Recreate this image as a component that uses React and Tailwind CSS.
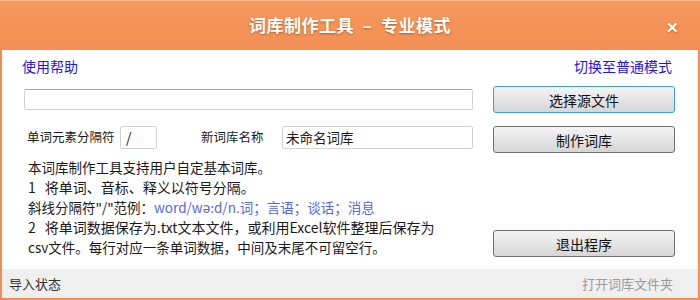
import React from 'react';

const font = { fontFamily: '"Noto Sans CJK SC", "Noto Sans", sans-serif' };

function Btn({ children, focused }) {
  return (
    <button
      className={
        focused
          ? 'w-[182px] h-[27px] shrink-0 rounded-[3px] border border-[#3a9fdc] bg-gradient-to-b from-[#f4f4f4] to-[#d6d6d6] text-[14px] text-[#111] leading-none'
          : 'w-[182px] h-[27px] shrink-0 rounded-[3px] border border-[#707070] bg-gradient-to-b from-[#f4f4f4] to-[#d6d6d6] text-[14px] text-[#111] leading-none'
      }
    >
      {children}
    </button>
  );
}

export default function App() {
  return (
    <div className="w-[700px] h-[300px] flex flex-col bg-[#f28e54] overflow-hidden" style={font}>
      {/* title bar */}
      <div className="h-[50px] shrink-0 flex items-center justify-center relative bg-gradient-to-b from-[#f7985c] to-[#f28e54] border-t border-[#f9b58a]">
        <span className="text-white font-bold text-[17px] [text-shadow:0_1px_2px_rgba(120,50,0,0.5)] tracking-[0.5px] -mt-[1px] whitespace-pre">
          词库制作工具  –  专业模式
        </span>
        <span className="absolute right-[21px] top-[15px] text-white font-bold text-[15px] [text-shadow:0_1px_2px_rgba(120,50,0,0.5)]">✕</span>
      </div>

      {/* body */}
      <div className="mx-[2px] h-[219px] bg-white flex flex-col text-[#1a1a1a]">
        <div className="flex justify-between pl-[20px] pr-[26px] pt-[7px] h-[25px] text-[14px] leading-[18px] text-[#2214f0]">
          <span>使用帮助</span>
          <span>切换至普通模式</span>
        </div>

        <div className="flex items-center pl-[22px] mt-[11px] gap-[20px]">
          <div className="w-[449px] h-[21px] border border-[#cfd3d8] border-t-[#a8a8a8] rounded-[2px]" />
          <Btn focused>选择源文件</Btn>
        </div>

        <div className="flex items-start pl-[22px] mt-[13px] gap-[20px]">
          <div className="w-[449px] h-[23px] flex items-center text-[12.5px] whitespace-nowrap">
            <span className="ml-[3px] w-[93px] shrink-0">单词元素分隔符</span>
            <div className="w-[37px] h-[23px] shrink-0 border border-[#cfd3d8] rounded-[2px] flex items-center pl-[5px] text-[14px]">/</div>
            <span className="ml-[44px] w-[81px] shrink-0">新词库名称</span>
            <div className="w-[191px] h-[23px] shrink-0 border border-[#cfd3d8] rounded-[2px] flex items-center pl-[3px] text-[13.5px]">未命名词库</div>
          </div>
          <Btn>制作词库</Btn>
        </div>

        <div className="flex items-end pl-[22px] mt-[4px] gap-[20px]">
          <div className="w-[449px] pl-[4px] text-[13.5px] leading-[20px] whitespace-nowrap">
            <div>本词库制作工具支持用户自定基本词库。</div>
            <div className="text-[14px]"><span className="mr-[9px]">1</span>将单词、音标、释义以符号分隔。</div>
            <div>
              斜线分隔符"/"范例：<span className="text-[#5566ee]">word/wə:d/n.词；言语；谈话；消息</span>
            </div>
            <div className="text-[14px]"><span className="mr-[9px]">2</span>将单词数据保存为.txt文本文件，或利用Excel软件整理后保存为</div>
            <div>csv文件。每行对应一条单词数据，中间及末尾不可留空行。</div>
          </div>
          <Btn>退出程序</Btn>
        </div>
      </div>

      {/* status bar */}
      <div className="mx-[2px] h-[29px] bg-[#efefef] flex items-center justify-between pl-[7px] pr-[25px] text-[13px]">
        <span className="text-[#333]">导入状态</span>
        <span className="text-[#9a9a9a]">打开词库文件夹</span>
      </div>
    </div>
  );
}
